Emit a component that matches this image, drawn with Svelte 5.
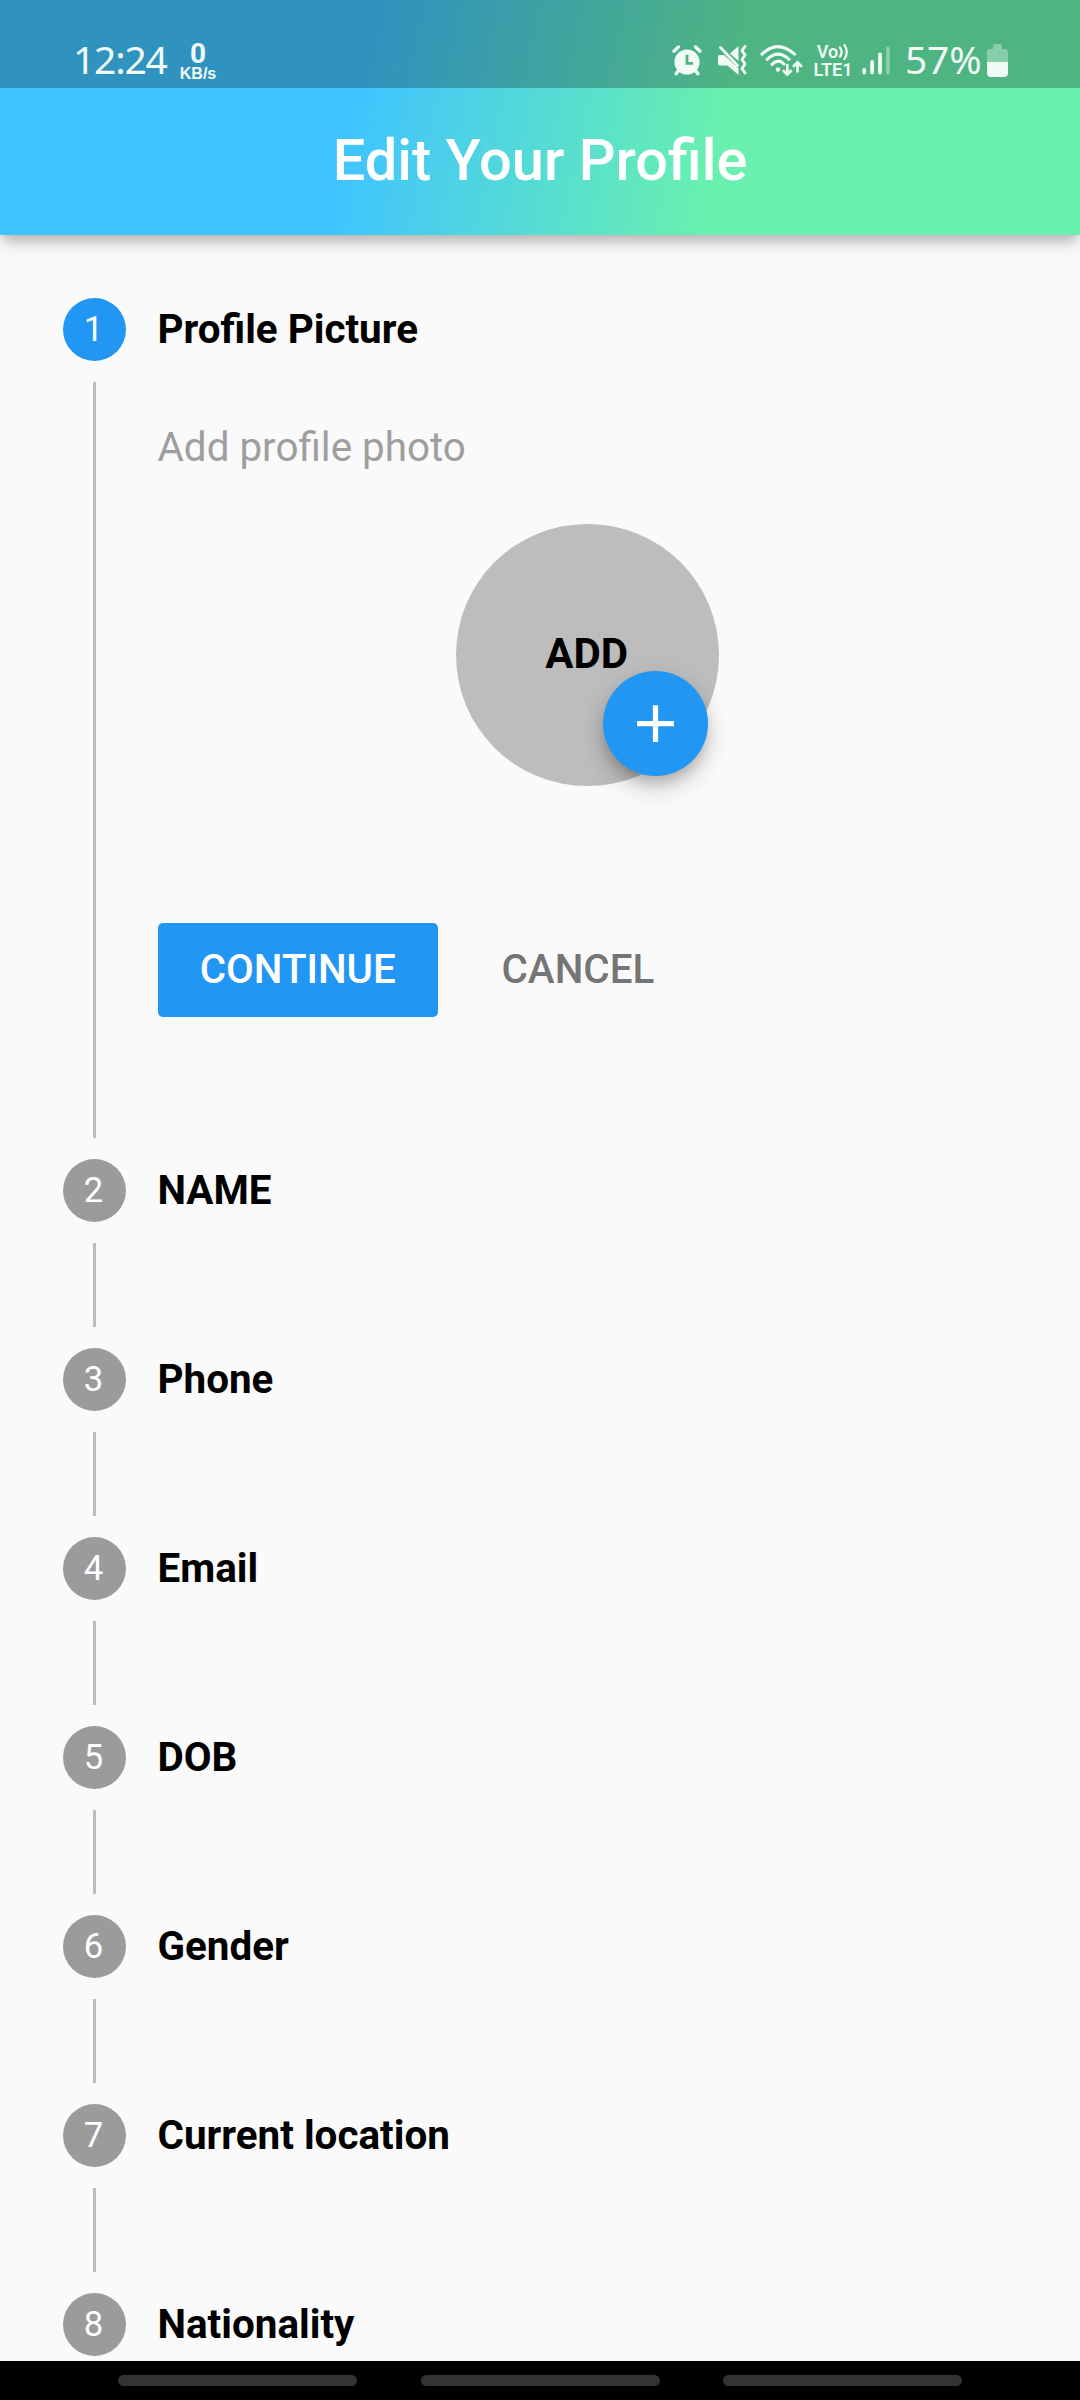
<script>
  const steps = [
    'Profile Picture',
    'NAME',
    'Phone',
    'Email',
    'DOB',
    'Gender',
    'Current location',
    'Nationality'
  ];
  let active = $state(0);
</script>

<div class="screen">
  <header>
    <div class="status">
      <span class="clock">12:24</span>
      <span class="speed"><b>0</b><small>KB/s</small></span>
      <svg class="alarm" width="30" height="32" viewBox="0 0 30 32">
        <circle cx="15" cy="18" r="12.6" fill="currentColor" />
        <path d="M2 7.2 6.4 3M28 7.2 23.6 3M6.6 26.5 4.2 29.6M23.4 26.5l2.4 3.1" stroke="currentColor" stroke-width="3.4" stroke-linecap="round" />
        <path d="M15 10.7v8.6h6" fill="none" stroke="#50b081" stroke-width="2.8" />
      </svg>
      <svg class="mute" width="30" height="32" viewBox="0 0 30 32">
        <path d="M1 12.5q0-1.5 1.5-1.5H7l14.500 13.500V31L10.500 21.500H3Q1 21.500 1 19.500zM21.500 2v15L13 9.500z" fill="currentColor" />
        <path d="M3.500 3.500 20.500 21.500" stroke="currentColor" stroke-width="2.800" stroke-linecap="round" />
        <path d="M28 2.500 25 6.500 28 11 25 15.500 28 20 25 24.500 28 29" fill="none" stroke="currentColor" stroke-width="2.900" stroke-linecap="round" stroke-linejoin="round" />
      </svg>
      <svg class="wifi" width="43" height="32" viewBox="0 0 43 32" fill="none" stroke="currentColor" stroke-width="3.100" stroke-linecap="round">
        <path d="M2 10.200Q17.500-5 34.500 10.200M7.200 15.300Q17.800 5 29 15.300M12 20.300Q18 14.200 24 20" />
        <circle cx="18" cy="25.500" r="2.200" fill="currentColor" stroke="none" />
        <path d="M27.300 21v9.300M23.700 27l3.600 3.600 3.600-3.600M37.500 27.500v-9.300M33.800 22l3.700-3.700 3.600 3.700" stroke-width="2.700" />
      </svg>
      <span class="volte">
        <span class="vo">Vo<svg width="11" height="18" viewBox="0 0 11 18" fill="none" stroke="currentColor" stroke-width="2.300" stroke-linecap="round"><path d="M2 4.500q3.300 4.500 0 9M6.500 2q4.500 7 0 14" /></svg></span>
        <span>LTE1</span>
      </span>
      <svg class="signal" width="29" height="32" viewBox="0 0 29 32" stroke="currentColor" stroke-width="3.800" stroke-linecap="round">
        <path d="M2.200 26v2.500M10.100 18v10.500M18 10.500v18" />
        <path d="M26 4v24.500" opacity=".36" />
      </svg>
      <span class="percent">57%</span>
      <svg class="battery" width="21" height="33" viewBox="0 0 21 33" fill="currentColor">
        <path d="M0 18V8q0-3 3-3h3V2q0-2 2-2h5q2 0 2 2v3h3q3 0 3 3v10z" opacity=".36" />
        <path d="M0 18h21v11q0 4-4 4H4q-4 0-4-4z" />
      </svg>
    </div>
    <h1>Edit Your Profile</h1>
  </header>

  <main>
    {#each steps as title, i}
      <section class:active={i === active}>
        <div class="rail">
          <span class="badge">{i + 1}</span>
          <span class="line"></span>
        </div>
        <div class="content">
          <h2>{title}</h2>
          {#if i === active}
            <p>Add profile photo</p>
            <div class="avatar">
              <span>ADD</span>
              <button class="fab" aria-label="Add photo">
                <svg width="63" height="63" viewBox="0 0 24 24"><path d="M19 13h-6v6h-2v-6H5v-2h6V5h2v6h6v2z" fill="#fff" /></svg>
              </button>
            </div>
            <div class="actions">
              <button class="continue" onclick={() => (active += 1)}>CONTINUE</button>
              <button class="cancel">CANCEL</button>
            </div>
          {/if}
        </div>
      </section>
    {/each}
  </main>

  <nav><i></i><i></i><i></i></nav>
</div>

<style>
  :global(body) {
    margin: 0;
    background: #fafafa;
  }
  .screen {
    width: 1080px;
    height: 2400px;
    display: flex;
    flex-direction: column;
    overflow: hidden;
    background: #fafafa;
    font-family: Roboto, sans-serif;
    color: #000;
  }
  header {
    flex: none;
    height: 235px;
    background: linear-gradient(102.28deg, #40c4ff 33.5%, #69f0ae 66.5%);
    box-shadow: 0 8px 10px -3px rgba(0, 0, 0, 0.15), 0 10px 16px -2px rgba(0, 0, 0, 0.16);
  }
  .status {
    box-sizing: border-box;
    height: 88px;
    padding: 32px 72px 0 73px;
    display: flex;
    align-items: center;
    background: rgba(0, 0, 0, 0.25);
    color: #f1fbf6;
  }
  .status svg {
    flex: none;
    display: block;
  }
  .clock,
  .percent {
    font: 400 39px/56px 'Noto Sans', sans-serif;
    white-space: nowrap;
    margin-top: -3px;
  }
  .clock {
    width: 107px;
    letter-spacing: -1.2px;
  }
  .speed {
    width: 36px;
    display: flex;
    flex-direction: column;
    align-items: center;
    margin-right: auto;
    padding-top: 3px;
  }
  .speed b {
    font: 700 28px/24px Roboto, sans-serif;
  }
  .speed small {
    font: 700 16px/15px 'Liberation Sans', sans-serif;
  }
  .alarm {
    margin-right: 15px;
  }
  .mute {
    margin-right: 13px;
  }
  .wifi {
    margin-right: 10px;
  }
  .volte {
    width: 40px;
    margin: 1px 9px 0 0;
    display: flex;
    flex-direction: column;
    align-items: center;
    font-size: 18px;
    font-weight: 600;
    line-height: 18px;
  }
  .vo {
    display: flex;
  }
  .signal {
    margin-right: 14px;
  }
  .percent {
    width: 75px;
    margin-right: 7px;
    letter-spacing: -0.2px;
  }
  h1 {
    margin: 0;
    text-align: center;
    font-weight: 500;
    font-size: 57.75px;
    line-height: 145px;
    color: #fff;
  }
  main {
    flex: 1;
    min-height: 0;
    overflow: hidden;
    padding: 63px 63px 0;
  }
  section {
    height: 189px;
    display: flex;
    gap: 31.5px;
  }
  section.active {
    height: 861px;
  }
  .rail {
    width: 63px;
    display: flex;
    flex-direction: column;
    align-items: center;
  }
  .badge {
    box-sizing: border-box;
    width: 63px;
    height: 63px;
    padding-right: 2px;
    border-radius: 50%;
    background: #9b9b9b;
    color: #fff;
    font-size: 34.65px;
    line-height: 62px;
    text-align: center;
  }
  .active .badge {
    background: #2196f3;
  }
  .line {
    flex: 1;
    width: 3px;
    margin: 21px 0;
    background: #bdbdbd;
  }
  .content {
    flex: 1;
  }
  h2 {
    margin: 0;
    font-size: 40.4px;
    line-height: 63px;
    font-weight: 700;
  }
  p {
    margin: 63px 0 0;
    font-size: 40.4px;
    line-height: 47px;
    color: #9e9e9e;
  }
  .avatar {
    position: relative;
    box-sizing: border-box;
    width: 262.5px;
    height: 262.5px;
    margin: 52.5px auto 0;
    padding-right: 1px;
    border-radius: 50%;
    background: #bdbdbd;
    text-align: center;
    font-size: 42px;
    line-height: 260px;
    font-weight: 700;
  }
  button {
    border: 0;
    padding: 0;
    font-family: inherit;
    font-size: 40.4px;
    font-weight: 500;
    background: none;
  }
  .fab {
    position: absolute;
    right: 10.5px;
    bottom: 10.5px;
    width: 105px;
    height: 105px;
    display: grid;
    place-items: center;
    border-radius: 50%;
    background: #2196f3;
    box-shadow: 0 8px 13px -3px rgba(0, 0, 0, 0.2), 0 14px 24px rgba(0, 0, 0, 0.14), 0 3px 30px rgba(0, 0, 0, 0.06);
  }
  .actions {
    display: flex;
    gap: 21.5px;
    margin-top: 136.5px;
  }
  .continue {
    width: 280.5px;
    height: 94.5px;
    border-radius: 5px;
    background: #2196f3;
    color: #fff;
  }
  .cancel {
    padding: 0 42px;
    color: #757575;
  }
  nav {
    flex: none;
    height: 39px;
    display: flex;
    justify-content: center;
    align-items: center;
    gap: 63.5px;
    background: #000;
  }
  nav i {
    width: 239px;
    height: 11px;
    border-radius: 6px;
    background: #333;
  }
</style>
